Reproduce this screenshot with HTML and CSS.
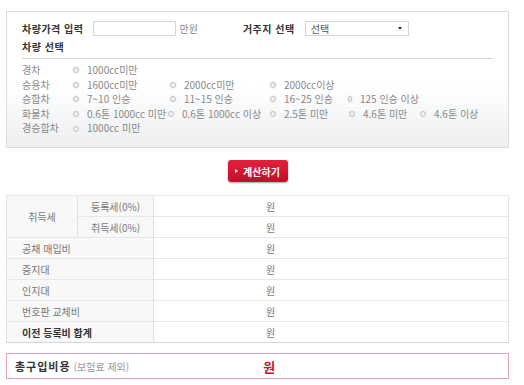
FILE: index.html
```html
<!DOCTYPE html>
<html lang="ko">
<head>
    <meta charset="UTF-8">
    <meta name="viewport" content="width=device-width, initial-scale=1.0">
    <title>이전 등록비 계산기</title>
    <link rel="stylesheet" href="styles.css">
</head>
<body>
    <div class="wrap">
        <div class="panel">
            <div class="top-row">
                <span class="title">차량가격 입력</span>
                <span class="price-input"></span>
                <span class="unit">만원</span>
                <span class="title area">거주지 선택</span>
                <span class="select">선택<i class="arrow"></i></span>
            </div>
            <div class="title sub">차량 선택</div>
            <div class="options">
                <div class="car-row">
                    <span class="kind">경차</span>
                    <label class="opt"><i class="radio"></i>1000cc미만</label>
                </div>
                <div class="car-row">
                    <span class="kind">승용차</span>
                    <label class="opt"><i class="radio"></i>1600cc미만</label>
                    <label class="opt"><i class="radio"></i>2000cc미만</label>
                    <label class="opt"><i class="radio"></i>2000cc이상</label>
                </div>
                <div class="car-row">
                    <span class="kind">승합차</span>
                    <label class="opt"><i class="radio"></i>7~10 인승</label>
                    <label class="opt"><i class="radio"></i>11~15 인승</label>
                    <label class="opt"><i class="radio"></i>16~25 인승</label>
                    <label class="opt"><i class="radio"></i>125 인승 이상</label>
                </div>
                <div class="car-row truck">
                    <span class="kind">화물차</span>
                    <label class="opt"><i class="radio"></i>0.6톤 1000cc 미만</label>
                    <label class="opt"><i class="radio"></i>0.6톤 1000cc 이상</label>
                    <label class="opt"><i class="radio"></i>2.5톤 미만</label>
                    <label class="opt"><i class="radio"></i>4.6톤 미만</label>
                    <label class="opt"><i class="radio"></i>4.6톤 이상</label>
                </div>
                <div class="car-row">
                    <span class="kind">경승합차</span>
                    <label class="opt"><i class="radio"></i>1000cc 미만</label>
                </div>
            </div>
        </div>

        <div class="btn-area">
            <button class="calc-btn"><i class="tri"></i>계산하기</button>
        </div>

        <table class="result">
            <tr>
                <th class="merged" rowspan="2">취득세</th>
                <th class="sub-th">등록세(0%)</th>
                <td>원</td>
            </tr>
            <tr>
                <th class="sub-th">취득세(0%)</th>
                <td>원</td>
            </tr>
            <tr>
                <th colspan="2">공채 매입비</th>
                <td>원</td>
            </tr>
            <tr>
                <th colspan="2">증지대</th>
                <td>원</td>
            </tr>
            <tr>
                <th colspan="2">인지대</th>
                <td>원</td>
            </tr>
            <tr>
                <th colspan="2">번호판 교체비</th>
                <td>원</td>
            </tr>
            <tr>
                <th colspan="2" class="sum">이전 등록비 합계</th>
                <td>원</td>
            </tr>
        </table>

        <div class="total">
            <span class="total-label">총구입비용</span>
            <span class="total-note">(보험료 제외)</span>
            <span class="total-value">원</span>
        </div>
    </div>
</body>
</html>
```

FILE: styles.css
```css
body {
    margin: 0;
    background: #fff;
    font-family: "Noto Sans CJK KR", "Noto Sans", sans-serif;
    font-size: 10px;
    color: #777;
}

.wrap {
    width: 503px;
    padding: 11px 0 0 6px;
}

/* 입력 패널 */
.panel {
    height: 127px;
    border: 1px solid #dcdcdc;
    background: linear-gradient(#fff 55%, #eceef0);
    padding: 8px 15px 0 15px;
}

.top-row {
    display: flex;
    align-items: center;
    height: 16px;
}

.title {
    font-weight: bold;
    color: #333;
    letter-spacing: 0.5px;
}

.price-input {
    width: 81px;
    height: 13px;
    border: 1px solid #d6d6d6;
    background: #fff;
    margin-left: 9px;
}

.unit {
    margin-left: 4px;
    color: #888;
}

.area {
    margin-left: 45px;
}

.select {
    position: relative;
    width: 97px;
    height: 13px;
    line-height: 13px;
    border: 1px solid #d6d6d6;
    background: #fff;
    margin-left: 10px;
    padding-left: 5px;
    color: #555;
}

.arrow {
    position: absolute;
    right: 6px;
    top: 5px;
    border-left: 2px solid transparent;
    border-right: 2px solid transparent;
    border-top: 3px solid #333;
}

.sub {
    height: 16px;
    line-height: 16px;
    margin-top: 3px;
}

.options {
    border-top: 1px solid #d3d3d3;
    margin-top: 3px;
    padding-top: 4px;
}

.car-row {
    display: grid;
    grid-template-columns: 51px 97px 100px 78px 71px 60px;
    height: 14.6px;
    line-height: 14.6px;
    white-space: nowrap;
}

.truck {
    grid-template-columns: 51px 95px 102px 79px 71px 60px;
}

.kind {
    color: #888;
}

.opt {
    display: flex;
    align-items: center;
    color: #888;
}

.radio {
    width: 4px;
    height: 4px;
    border: 1px solid #c4c4c4;
    border-radius: 50%;
    background: #f0f0f0;
    box-shadow: 0 0 0 1px #f4f4f4;
    margin-right: 8px;
}

/* 버튼 */
.btn-area {
    display: flex;
    justify-content: center;
    padding: 12px 0 13px;
}

.calc-btn {
    width: 60px;
    height: 22px;
    border: none;
    border-radius: 3px;
    background: linear-gradient(#e3203c, #c30f2a);
    box-shadow: 0 1px 2px rgba(0,0,0,0.35);
    color: #fff;
    font-family: inherit;
    font-size: 10px;
    font-weight: bold;
    display: flex;
    align-items: center;
    justify-content: center;
    padding: 0;
}

.tri {
    border-top: 2px solid transparent;
    border-bottom: 2px solid transparent;
    border-left: 3px solid #fff;
    margin-right: 5px;
}

/* 결과 표 */
.result {
    width: 503px;
    border-collapse: collapse;
    border-top: 1px solid #c4c4c4;
    border-bottom: 1px solid #d6d6d6;
    border-left: 1px solid #e2e2e2;
    border-right: 1px solid #e2e2e2;
}

.result th,
.result td {
    height: 20px;
    padding: 0;
    border-top: 1px solid #e8e8e8;
    font-weight: normal;
}

.result th {
    background: #f8f8f8;
    text-align: left;
    padding-left: 15px;
    color: #777;
    border-right: 1px solid #e2e2e2;
}

.result th.merged {
    width: 70px;
    text-align: center;
    padding-left: 0;
}

.result th.sub-th {
    width: 75px;
    text-align: center;
    padding-left: 0;
}

.result th.sum {
    font-weight: bold;
    color: #333;
}

.result td {
    padding-left: 112px;
    color: #777;
}

/* 총구입비용 */
.total {
    display: flex;
    align-items: center;
    height: 24px;
    margin-top: 10px;
    border: 1px solid #e4a5b0;
    padding-left: 8px;
}

.total-label {
    font-size: 11px;
    font-weight: bold;
    color: #333;
    letter-spacing: 1px;
}

.total-note {
    margin-left: 3px;
    color: #999;
}

.total-value {
    margin-left: 134px;
    font-size: 13px;
    font-weight: bold;
    color: #d0102c;
}
```
